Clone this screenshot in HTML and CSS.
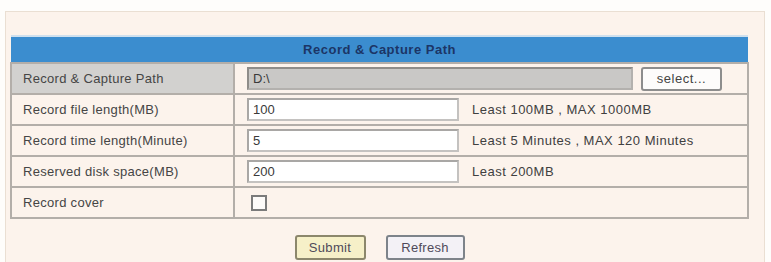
FILE: index.html
```html
<!DOCTYPE html>
<html>

<head>
    <meta http-equiv="Content-Type" content="text/html; charset=utf-8" />
    <title>Record &amp; Capture Path</title>
    <link rel="stylesheet" href="styles.css">
</head>

<body>
    <div class="panel">
        <table class="setting">
            <tr>
                <th colspan="2">Record &amp; Capture Path</th>
            </tr>
            <tr class="first">
                <td class="label">Record &amp; Capture Path</td>
                <td class="value">
                    <div class="line">
                        <input class="path" type="text" value="D:\" readonly />
                        <button class="select">select...</button>
                    </div>
                </td>
            </tr>
            <tr>
                <td class="label">Record file length(MB)</td>
                <td class="value">
                    <div class="line">
                        <input class="num" type="text" value="100" />
                        <span class="tip">Least 100MB , MAX 1000MB</span>
                    </div>
                </td>
            </tr>
            <tr>
                <td class="label">Record time length(Minute)</td>
                <td class="value">
                    <div class="line">
                        <input class="num" type="text" value="5" />
                        <span class="tip">Least 5 Minutes , MAX 120 Minutes</span>
                    </div>
                </td>
            </tr>
            <tr>
                <td class="label">Reserved disk space(MB)</td>
                <td class="value">
                    <div class="line">
                        <input class="num" type="text" value="200" />
                        <span class="tip">Least 200MB</span>
                    </div>
                </td>
            </tr>
            <tr>
                <td class="label">Record cover</td>
                <td class="value">
                    <div class="line">
                        <span class="check"></span>
                    </div>
                </td>
            </tr>
        </table>
        <div class="actions">
            <button class="btn submit">Submit</button>
            <button class="btn refresh">Refresh</button>
        </div>
    </div>
</body>

</html>
```

FILE: styles.css
```css
body {
    margin: 0;
    padding-top: 11px;
    background: #fefdfb;
    font-family: "Liberation Sans", Arial, sans-serif;
    font-size: 13px;
    color: #454545;
}

.panel {
    margin-left: 5px;
    width: 760px;
    height: 260px;
    box-sizing: border-box;
    border: 1px solid #eadfd3;
    border-bottom: none;
    background: #fcf3ec;
    padding: 23px 0 0 4px;
}

.setting {
    width: 739px;
    border-collapse: collapse;
}

.setting th {
    height: 25px;
    padding: 0;
    background: #3b8dcf;
    border-top: 2px solid #cfe0ee;
    color: #1c3566;
    font-size: 13px;
    font-weight: bold;
    letter-spacing: 0.5px;
    text-align: center;
}

.setting td {
    height: 29px;
    padding: 0;
    border: 2px solid #b3aea9;
}

.setting td.label {
    width: 210px;
    padding-left: 11px;
    letter-spacing: 0.3px;
}

.setting tr.first td.label {
    background: #d2d1cf;
}

.setting td.value {
    padding-left: 12px;
}

.line {
    display: flex;
    align-items: center;
}

.line input {
    box-sizing: border-box;
    height: 23px;
    margin: 0;
    padding: 0 0 0 4px;
    font-family: "Liberation Sans", Arial, sans-serif;
    font-size: 13px;
    color: #3a3a3a;
    border: 2px solid #c4c2c0;
    border-top-color: #a9a7a5;
    border-left-color: #a9a7a5;
    background: #fff;
    outline: none;
}

.line input.path {
    width: 386px;
    background: #c9c8c6;
    border-color: #b3b1ae;
    border-top-color: #8e8c89;
    border-left-color: #8e8c89;
}

.line input.num {
    width: 212px;
}

.select {
    margin-left: 8px;
    width: 81px;
    height: 24px;
    font-family: "Liberation Sans", Arial, sans-serif;
    font-size: 13px;
    letter-spacing: 0.5px;
    color: #444;
    background: #fdfcfb;
    border: 2px solid #8d8d8d;
    border-radius: 3px;
    padding: 0;
}

.tip {
    margin-left: 13px;
    font-size: 13px;
    letter-spacing: 0.5px;
    color: #404040;
}

.check {
    margin-left: 4px;
    width: 12px;
    height: 12px;
    border: 2px solid #7b7b7b;
    background: #fdfbf9;
}

.actions {
    width: 739px;
    display: flex;
    justify-content: center;
    gap: 20px;
    margin-top: 16px;
}

.btn {
    height: 25px;
    padding: 0;
    font-family: "Liberation Sans", Arial, sans-serif;
    font-size: 13px;
    letter-spacing: 0.3px;
    color: #4f4a5a;
    border-radius: 3px;
}

.submit {
    width: 71px;
    background: #f6f0c8;
    border: 2px solid #8c876c;
}

.refresh {
    width: 79px;
    background: #f3f1f6;
    border: 2px solid #7d838a;
}
```
